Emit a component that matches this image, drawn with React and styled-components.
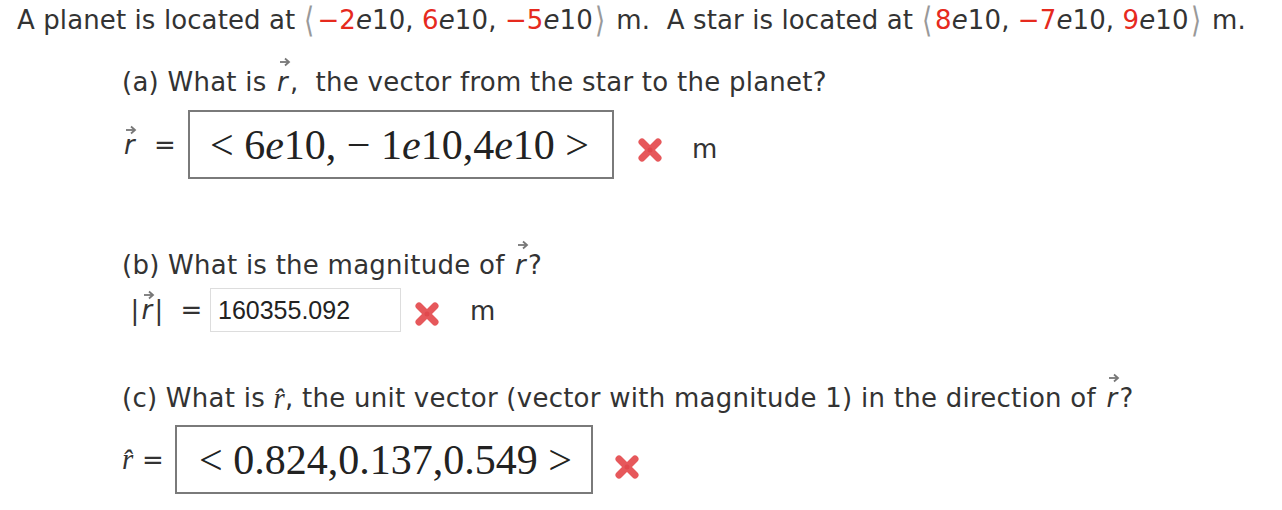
import React from 'react';
import styled, { createGlobalStyle } from 'styled-components';

const GlobalStyle = createGlobalStyle`
  body {
    margin: 0;
    background: #fff;
  }
`;

const Page = styled.div`
  font-family: "DejaVu Sans", Verdana, sans-serif;
  font-size: 26px;
  letter-spacing: 0.25px;
  color: #333;
  padding-left: 17px;
`;

const Line = styled.div`
  height: 40px;
  line-height: 40px;
  white-space: pre;
  display: flex;
  align-items: center;
  letter-spacing: ${(p) => (p.$tight ? '0.1px' : 'inherit')};
`;

const Red = styled.span`
  color: #e62a1e;
`;

const Em = styled.span`
  font-style: italic;
`;

const Bracket = styled.span`
  display: inline-block;
  color: #999;
  font-weight: 300;
  transform: scaleY(1.35);
  margin: 0 ${(p) => p.$after || 2}px 0 ${(p) => p.$before || 2}px;
`;

const Part = styled.section`
  padding-left: 105px;
  margin-top: ${(p) => p.$top}px;
`;

const Row = styled.div`
  display: flex;
  align-items: center;
  margin-top: ${(p) => p.$top}px;
`;

const VecWrap = styled.span`
  position: relative;
  display: inline-block;
  font-style: italic;
  padding: 0 2px;
`;

const ArrowMark = styled.svg`
  position: absolute;
  left: 50%;
  top: -5px;
  width: 12px;
  height: 10px;
  margin-left: -4px;
`;

const Label = styled.span`
  width: ${(p) => p.$w}px;
  flex: none;
  white-space: pre;
`;

const MathBox = styled.div`
  box-sizing: border-box;
  width: ${(p) => p.$w}px;
  height: 69px;
  border: 2px solid #7a7a7a;
  padding-left: ${(p) => p.$pad}px;
  display: flex;
  align-items: center;
  font-family: "Liberation Serif", "Times New Roman", serif;
  font-size: 42px;
  letter-spacing: 0;
  color: #222;
  white-space: pre;
`;

const MathE = styled.span`
  font-style: italic;
`;

const Input = styled.div`
  box-sizing: border-box;
  width: 191px;
  height: 44px;
  border: 1px solid #ddd;
  padding-left: 7px;
  display: flex;
  align-items: center;
  font-family: "Liberation Sans", Arial, sans-serif;
  font-size: 25px;
  letter-spacing: 0;
  color: #222;
`;

const Cross = styled.svg`
  width: 28px;
  height: 28px;
  flex: none;
  margin-left: ${(p) => p.$left}px;
  margin-top: ${(p) => p.$down || 0}px;
`;

const Unit = styled.span`
  margin-left: ${(p) => p.$left}px;
  margin-top: ${(p) => p.$down || 0}px;
`;

const HatR = styled.span`
  font-family: "Liberation Serif", "Times New Roman", serif;
  font-style: italic;
  font-size: 29px;
`;

function Vec() {
  return (
    <VecWrap>
      r
      <ArrowMark viewBox="0 0 12 10">
        <path d="M1 5 H9" stroke="#777" strokeWidth="1.8" />
        <path d="M6 1.5 L10 5 L6 8.5" fill="none" stroke="#777" strokeWidth="1.8" />
      </ArrowMark>
    </VecWrap>
  );
}

function WrongMark({ left, down }) {
  return (
    <Cross viewBox="0 0 28 28" $left={left} $down={down}>
      <g stroke="#e6585b" strokeWidth="7" strokeLinecap="round">
        <path d="M6 6 L22 22" />
        <path d="M22 6 L6 22" />
      </g>
      <circle cx="14" cy="14" r="2.5" fill="#d9373b" opacity="0.45" />
    </Cross>
  );
}

function Coord({ a, b, c }) {
  return (
    <>
      <Bracket $before={9} $after={3}>⟨</Bracket>
      <Red>{a}</Red>
      <Em>e</Em>10, <Red>{b}</Red>
      <Em>e</Em>10, <Red>{c}</Red>
      <Em>e</Em>10
      <Bracket $before={2} $after={3}>⟩</Bracket>
    </>
  );
}

export default function App() {
  return (
    <Page>
      <GlobalStyle />
      <Line $tight>
        {'A planet is located at'}
        <Coord a="−2" b="6" c="−5" />
        {' m.  A star is located at'}
        <Coord a="8" b="−7" c="9" />
        {' m.'}
      </Line>

      <Part $top={22}>
        <Line>
          {'(a) What is '}
          <Vec />
          {',  the vector from the star to the planet?'}
        </Line>
        <Row $top={8}>
          <Label $w={66}>
            <Vec />
            {'  ='}
          </Label>
          <MathBox $w={426} $pad={20}>
            {'< 6'}
            <MathE>e</MathE>
            {'10, − 1'}
            <MathE>e</MathE>
            {'10,4'}
            <MathE>e</MathE>
            {'10 >'}
          </MathBox>
          <WrongMark left={22} down={11} />
          <Unit $left={28} $down={8}>m</Unit>
        </Row>
      </Part>

      <Part $top={66}>
        <Line>
          {'(b) What is the magnitude of '}
          <Vec />
          ?
        </Line>
        <Row $top={3}>
          <Label $w={88}>
            {' |'}
            <Vec />
            {'|  ='}
          </Label>
          <Input>160355.092</Input>
          <WrongMark left={12} down={8} />
          <Unit $left={29} $down={2}>m</Unit>
        </Row>
      </Part>

      <Part $top={46}>
        <Line>
          {'(c) What is '}
          <HatR>r̂</HatR>
          {', the unit vector (vector with magnitude 1) in the direction of '}
          <Vec />
          ?
        </Line>
        <Row $top={7}>
          <Label $w={53}>
            <HatR>r̂</HatR>
            {' ='}
          </Label>
          <MathBox $w={418} $pad={22}>
            {'< 0.824,0.137,0.549 >'}
          </MathBox>
          <WrongMark left={20} down={14} />
        </Row>
      </Part>
    </Page>
  );
}
